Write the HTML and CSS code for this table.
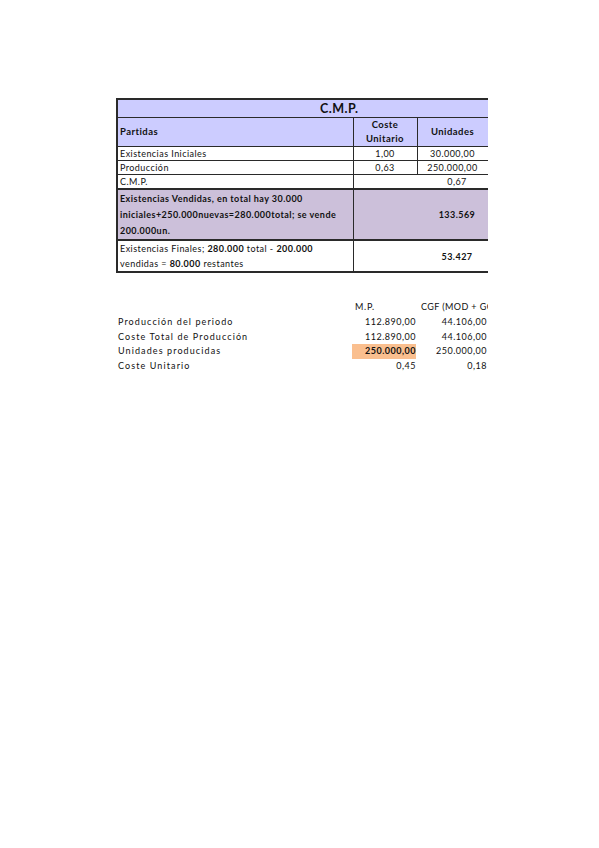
FILE: index.html
```html
<!DOCTYPE html>
<html lang="es">
<head>
<meta charset="utf-8">
<title>C.M.P.</title>
<link rel="stylesheet" href="styles.css">
</head>
<body>
<div class="page">
  <div class="clip">
    <table class="cmp">
      <colgroup>
        <col class="c1"><col class="c2"><col class="c3"><col class="c4">
      </colgroup>
      <tr class="h1"><th colspan="4">C.M.P.</th></tr>
      <tr class="h2">
        <th class="left">Partidas</th>
        <th>Coste<br>Unitario</th>
        <th>Unidades</th>
        <th class="blank"></th>
      </tr>
      <tr class="r">
        <td class="left">Existencias Iniciales</td>
        <td class="num box">1,00</td>
        <td class="num box">30.000,00</td>
        <td class="blank"></td>
      </tr>
      <tr class="r">
        <td class="left">Producción</td>
        <td class="num box">0,63</td>
        <td class="num box">250.000,00</td>
        <td class="blank"></td>
      </tr>
      <tr class="r">
        <td class="left">C.M.P.</td>
        <td colspan="3" class="mid">0,67</td>
      </tr>
      <tr class="sold">
        <td class="left b">Existencias Vendidas, en total hay 30.000 iniciales+250.000nuevas=280.000total; se vende 200.000un.</td>
        <td colspan="3" class="mid b">133.569</td>
      </tr>
      <tr class="fin">
        <td class="left">Existencias Finales; <b>280.000</b> total - <b>200.000</b> vendidas = <b>80.000</b> restantes</td>
        <td colspan="3" class="mid b">53.427</td>
      </tr>
    </table>
  </div>

  <div class="clip lower">
    <div class="grid">
      <span></span><span class="hd">M.P.</span><span class="hd hd2">CGF (MOD + GGF)</span>
      <span class="lbl">Producción del periodo</span><span class="v">112.890,00</span><span class="v">44.106,00</span>
      <span class="lbl">Coste Total de Producción</span><span class="v">112.890,00</span><span class="v">44.106,00</span>
      <span class="lbl">Unidades producidas</span><span class="v hl">250.000,00</span><span class="v">250.000,00</span>
      <span class="lbl">Coste Unitario</span><span class="v">0,45</span><span class="v">0,18</span>
    </div>
  </div>
</div>
</body>
</html>
```

FILE: styles.css
```css
html, body {
  margin: 0;
  padding: 0;
  background: #ffffff;
}
body {
  font-family: Lato, "Open Sans", "Liberation Sans", sans-serif;
  color: #111;
  width: 599px;
  height: 848px;
}
.page {
  padding: 98px 0 0 116px;
}
.clip {
  width: 372px;
  overflow: hidden;
}
.cmp {
  border-collapse: collapse;
  table-layout: fixed;
  width: 444px;
  font-size: 9px;
  letter-spacing: 0.45px;
}
.c1 { width: 236px; }
.c2 { width: 64px; }
.c3 { width: 71px; }
.c4 { width: 73px; }
.cmp th, .cmp td {
  border: 1px solid #2a2a2a;
  padding: 0 2px;
  line-height: 13px;
}
.cmp th {
  background: #ccccff;
  font-weight: 700;
  text-align: center;
}
.h1 th {
  height: 17px;
  font-size: 12.5px;
  letter-spacing: 0.5px;
  border-top: 2px solid #2a2a2a;
  border-left: 2px solid #2a2a2a;
}
.h2 th {
  height: 28px;
  font-size: 9.5px;
  line-height: 14px;
}
.cmp .left {
  text-align: left;
  border-left: 2px solid #2a2a2a;
}
.r td { height: 13px; }
.num { text-align: center; }
.mid { text-align: center; }
.b { font-weight: 700; }
.cmp .blank {
  background: #fff;
  border-top: none;
  border-bottom: none;
  border-right: none;
}
.cmp .h2 .blank { background: #ccccff; }
.sold td {
  background: #ccc0da;
  height: 49px;
  line-height: 16px;
  border-top: 2px solid #2a2a2a;
  border-bottom: 2px solid #2a2a2a;
}
.fin td {
  height: 28px;
  line-height: 15px;
  border-bottom: 2px solid #2a2a2a;
}
.lower {
  margin-top: 27px;
}
.grid {
  display: grid;
  grid-template-columns: 236px 64px 100px;
  grid-auto-rows: 14.8px;
  font-size: 9px;
  line-height: 14.8px;
  width: 400px;
}
.lbl {
  padding-left: 2px;
  letter-spacing: 1.1px;
}
.hd { padding-left: 3px; letter-spacing: 0.7px; }
.hd2 { padding-left: 5px; white-space: nowrap; letter-spacing: 0.4px; }
.v {
  text-align: right;
  letter-spacing: 0.5px;
}
.grid .v:nth-child(3n) {
  padding-right: 29px;
}
.hl {
  background: #fabf8f;
  font-weight: 700;
}
```
